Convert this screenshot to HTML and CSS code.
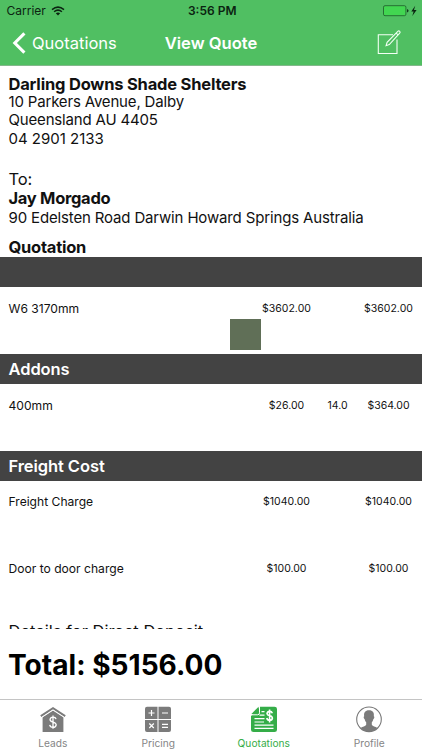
FILE: index.html
```html
<!DOCTYPE html>
<html lang="en">
<head>
<meta charset="utf-8">
<title>View Quote</title>
<link rel="stylesheet" href="styles.css">
</head>
<body>
<div class="app">
  <header class="top">
    <div class="status">
      <div class="carrier"><span>Carrier</span>
        <svg width="14" height="10" viewBox="0 0 14 10" fill="none" stroke="#0b2411" stroke-width="1.5"><path d="M1 3.6Q7-1.4 13 3.6M3.1 5.8Q7 2.5 10.9 5.8"/><path d="M4.8 7.2Q7 5.6 9.2 7.2L7 9.6Z" fill="#0b2411" stroke="none"/></svg>
      </div>
      <div class="clock">3:56 PM</div>
      <svg class="battery" width="35" height="12" viewBox="0 0 35 12"><rect x=".5" y=".7" width="22.4" height="10" rx="1.5" fill="#42d651" stroke="#1d5929" stroke-width=".8"/><path d="M24 4v3.5q1.6-.5 1.6-1.75T24 4Z" fill="#123d1b"/><path d="M32.2.8 28.3 6.4h2.3L29.3 11l4.3-6H31Z" fill="#0b2411"/></svg>
    </div>
    <nav class="nav">
      <a class="back"><svg width="14" height="22" viewBox="0 0 14 22" fill="none" stroke="#fff" stroke-width="3.1"><path d="M12.4 1.3 2.8 11 12.4 20.7"/></svg><span>Quotations</span></a>
      <h1>View Quote</h1>
      <svg class="edit" width="25" height="25" viewBox="0 0 25 25" fill="none" stroke="#f2fff4" stroke-width="1.1"><path d="M16 4.8H1.3v18.7h18.7V9.5"/><path d="M20.8 1.4q1-1 1.9-.1t0 1.8L12.3 14.5l-3.2 1.2 1-3.3ZM19.2 3.2l2 1.9"/></svg>
    </nav>
  </header>
  <main class="quote">
    <section class="from">
      <p class="name">Darling Downs Shade Shelters</p>
      <p>10 Parkers Avenue, Dalby</p>
      <p>Queensland AU 4405</p>
      <p class="phone">04 2901 2133</p>
    </section>
    <section class="to">
      <p class="to-label">To:</p>
      <p class="name">Jay Morgado</p>
      <p>90 Edelsten Road Darwin Howard Springs Australia</p>
    </section>
    <h2 class="title">Quotation</h2>
    <div class="bar"></div>
    <div class="row"><span>W6 3170mm</span><i class="swatch"></i><b>$3602.00</b><b></b><b>$3602.00</b></div>
    <div class="bar">Addons</div>
    <div class="row"><span>400mm</span><i></i><b>$26.00</b><b>14.0</b><b>$364.00</b></div>
    <div class="bar">Freight Cost</div>
    <div class="row"><span>Freight Charge</span><i></i><b>$1040.00</b><b></b><b>$1040.00</b></div>
    <div class="row"><span>Door to door charge</span><i></i><b>$100.00</b><b></b><b>$100.00</b></div>
    <p class="details">Details for Direct Deposit</p>
  </main>
  <div class="total"><span>Total: $5156.00</span></div>
  <footer class="tabs">
    <a><svg width="26" height="27" viewBox="0 0 26 27"><path fill="#7b7b7b" d="M2.6 11.2 13 4.4l10.4 6.8V26H2.6Z"/><path d="M.8 10.2 13 2.1l12.2 8.1" fill="none" stroke="#7b7b7b" stroke-width="2"/><path d="M1.5 11.5 13 4l11.5 7.5" fill="none" stroke="#fff" stroke-width=".7"/><path d="M16.1 13.2q-.5-2-3.1-2t-3 2.4q0 1.8 3 2.5t3.2 2.7q-.3 2.5-3.2 2.5t-3.3-2.4M13 9.6v13.2" fill="none" stroke="#fff" stroke-width="1.3"/></svg><span>Leads</span></a>
    <a><svg width="26" height="27" viewBox="0 0 26 27"><path fill="#7b7b7b" d="M2 .8h10.5v12.1H0V2.8q0-2 2-2ZM13.5.8H24q2 0 2 2v10.1H13.5ZM0 13.9h12.5V26H2q-2 0-2-2ZM13.5 13.9H26V24q0 2-2 2H13.5Z"/><path d="M3.5 7h6M6.5 4v6M17 7h6M4.3 17.5l4.5 4.5m0-4.5L4.3 22M17 18.3h6M17 21.3h6" stroke="#fff" stroke-width="1.2"/></svg><span>Pricing</span></a>
    <a class="active"><svg width="26" height="27" viewBox="0 0 26 27"><path fill="#35ad48" d="M9 .8h14.5Q26 .8 26 3v20.8q0 2.2-2.5 2.2h-21Q0 26 0 23.8V10Z"/><path fill="#35ad48" d="M7.6.8v7.1H.4Z"/><path d="M8.5.8v6q0 2-1.7 2H0" fill="none" stroke="#fff" stroke-width="1"/><path d="M10.5 5.7h3M8.5 9.2h5M3.5 12.6h10M3.5 16h9.5M3.5 19.2h19M3.5 22.4h19" stroke="#fff" stroke-width="1.2"/><path d="M21.3 7.3q-.5-1.9-2.7-1.9T16 7.7q.2 1.7 2.7 2.1t2.7 2.3q-.2 2.2-2.7 2.2T15.8 12M18.6 3.4v13" fill="none" stroke="#fff" stroke-width="1.6"/></svg><span>Quotations</span></a>
    <a><svg width="26" height="27" viewBox="0 0 26 27"><circle cx="13" cy="13.3" r="12.3" fill="#fff" stroke="#777" stroke-width="1.1"/><path fill="#7b7b7b" d="M13 4.2c3.8 0 5.4 2.4 4.8 6.1.9.2.6 2.5-.5 3-.3 1.4-.8 2.2-1.5 3v2.5c.8 1.6 3.5 1.9 5.6 3.1q-3.5 3.6-8.4 3.6t-8.4-3.6c2.1-1.2 4.8-1.5 5.6-3.1v-2.5c-.7-.8-1.2-1.6-1.5-3-1.1-.5-1.4-2.8-.5-3-.6-3.7 1-6.1 4.8-6.1Z"/></svg><span>Profile</span></a>
  </footer>
</div>
</body>
</html>
```
FILE: styles.css
```css
* { box-sizing: border-box; }
body { margin: 0; background: #fff; font-family: Inter, "Liberation Sans", sans-serif; color: #111; }
h1, h2, p { margin: 0; }
svg { display: block; flex: none; }
.app { display: flex; flex-direction: column; width: 422px; height: 750px; overflow: hidden; white-space: nowrap; }
.top { height: 66px; background: #50bf62; border-bottom: 1px solid #83b88b; color: #fff; flex: none; }
.status { height: 21px; display: grid; grid-template-columns: 1fr auto 1fr; align-items: center; padding: 0 4px 0 6.5px; color: #0b2411; font-size: 12px; }
.carrier { display: flex; align-items: center; gap: 5px; }
.clock { font-weight: 600; }
.battery { justify-self: end; }
.nav { height: 43px; display: grid; grid-template-columns: 1fr auto 1fr; align-items: center; padding: 0 12px; }
.back { display: flex; align-items: center; gap: 6px; font-size: 16.5px; }
h1 { font-size: 16.6px; font-weight: 600; }
.edit { justify-self: end; margin-right: 8px; }
.quote { height: 563px; overflow: hidden; flex: none; }
.from { padding: 8.6px 0 0 8.5px; font-size: 15px; line-height: 18.4px; letter-spacing: -.17px; }
.phone { letter-spacing: 0; }
.name { font-weight: 700; font-size: 16.5px; letter-spacing: -.2px; }
.to { padding: 21.4px 0 0 8.5px; font-size: 15px; line-height: 19.4px; letter-spacing: -.15px; }
.to-label { font-size: 16.5px; }
.to .name { letter-spacing: -.3px; }
.title { padding-left: 8.5px; margin-top: 9.6px; font-size: 16.5px; line-height: 20px; height: 20px; letter-spacing: -.25px; }
.bar { height: 30px; background: #434343; color: #fff; font-weight: 600; font-size: 16.5px; line-height: 30px; padding-left: 8.5px; letter-spacing: -.08px; }
.row { height: 66.6px; display: grid; grid-template-columns: 221.5px 31px 51px 51px 51px; padding: 10.5px 0 0 8.5px; line-height: 21px; font-size: 12.1px; }
.row b { font-weight: 400; font-size: 10.5px; text-align: center; }
.swatch { height: 31px; margin-top: 21px; background: #606f57; }
.details { padding-left: 8.5px; font-size: 16.5px; line-height: 20px; margin-top: 7px; }
.total { height: 70px; padding: 16px 0 0 8px; font-size: 28.1px; line-height: 40px; font-weight: 700; color: #000; flex: none; }
.tabs { flex: 1; border-top: 1px solid #c4c4c4; display: grid; grid-template-columns: repeat(4, 1fr); }
.tabs a { display: flex; flex-direction: column; align-items: center; padding-top: 6px; font-size: 10.2px; line-height: 12px; gap: 4px; color: #858585; }
.tabs .active { color: #35ad48; }
```
